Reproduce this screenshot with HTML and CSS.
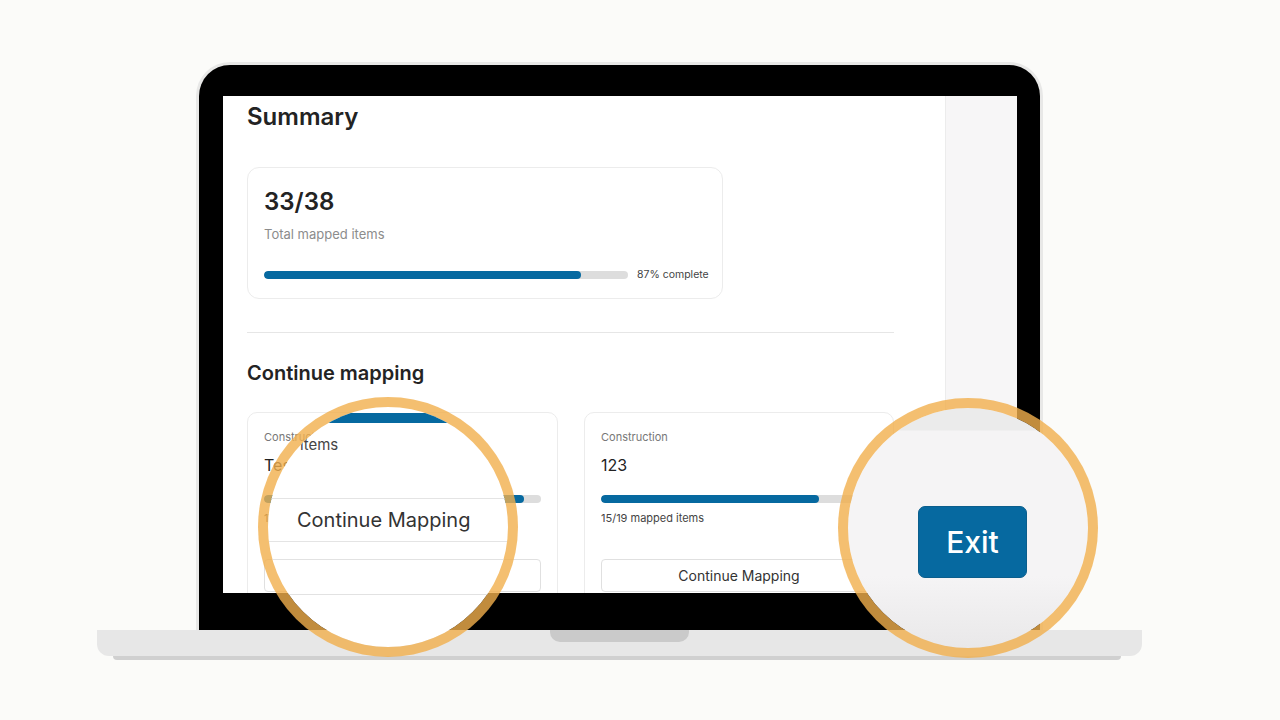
FILE: index.html
```html
<!DOCTYPE html>
<html lang="en">
<head>
<meta charset="utf-8">
<title>Summary</title>
<link rel="stylesheet" href="styles.css">
</head>
<body>
<div class="stage">
  <div class="laptop">
    <div class="lid">
      <div class="screen">
        <main class="main">
          <h1 class="title">Summary</h1>
          <section class="summary-card">
            <div class="big">33/38</div>
            <div class="muted">Total mapped items</div>
            <div class="bar-row">
              <div class="bar bar-summary"><div class="fill" style="width:87%"></div></div>
              <span class="pct">87% complete</span>
            </div>
          </section>
          <hr class="divider">
          <h2 class="subtitle">Continue mapping</h2>
          <div class="cards">
            <article class="card">
              <div class="cat">Construction</div>
              <div class="name">Test</div>
              <div class="bar"><div class="fill" style="width:94%"></div></div>
              <div class="count">17/18 mapped items</div>
              <button class="btn">Continue Mapping</button>
            </article>
            <article class="card">
              <div class="cat">Construction</div>
              <div class="name">123</div>
              <div class="bar"><div class="fill" style="width:79%"></div></div>
              <div class="count">15/19 mapped items</div>
              <button class="btn">Continue Mapping</button>
            </article>
          </div>
        </main>
        <aside class="side"></aside>
      </div>
    </div>
    <div class="base"><div class="notch"></div></div>
    <div class="foot"></div>
  </div>

  <div class="lens lens-left">
    <div class="mag-bar"></div>
    <div class="mag-items">items</div>
    <div class="mag-line first"></div>
    <div class="mag-text">Continue Mapping</div>
    <div class="mag-line second"></div>
    <div class="mag-btn"></div>
  </div>

  <div class="lens lens-right">
    <button class="exit">Exit</button>
  </div>
</div>
</body>
</html>
```

FILE: styles.css
```css
* { box-sizing: border-box; }

html, body {
  margin: 0;
  padding: 0;
  background: #fbfbf9;
  font-family: Inter, "Noto Sans", "Liberation Sans", sans-serif;
}

.stage {
  position: relative;
  width: 1280px;
  height: 720px;
  padding-top: 62px;
  overflow: hidden;
}

.laptop {
  margin-left: 97px;
  width: 1045px;
}

.lid {
  margin-left: 99px;
  width: 847px;
  height: 568px;
  border: 3px solid #e8e8e7;
  border-bottom: 0;
  border-radius: 34px 34px 0 0;
  background: #000;
  padding: 31px 23px 0 24px;
}

.screen {
  display: flex;
  height: 497px;
  background: #fff;
  overflow: hidden;
}

.main {
  flex: none;
  width: 722px;
  padding: 6px 51px 0 24px;
  background: #fff;
}

.side {
  flex: 1;
  background: #f7f6f7;
  border-left: 1px solid #ececec;
}

.title {
  margin: 0;
  font-size: 24px;
  line-height: 29px;
  font-weight: 600;
  color: #232323;
}

.summary-card {
  margin-top: 36px;
  width: 476px;
  height: 132px;
  border: 1px solid #ececec;
  border-radius: 12px;
  padding: 19px 16px 20px 16px;
}

.big {
  font-size: 24px;
  line-height: 29px;
  font-weight: 600;
  color: #232323;
}

.muted {
  margin-top: 10px;
  font-size: 13px;
  line-height: 16px;
  color: #8c8c8c;
}

.bar-row {
  margin-top: 26px;
  display: flex;
  align-items: center;
  gap: 9px;
}

.bar {
  height: 8px;
  background: #dddddd;
  border-radius: 4px;
  overflow: hidden;
}

.bar-summary { width: 364px; flex: none; }

.fill {
  height: 100%;
  background: #0669a0;
  border-radius: 4px;
}

.pct {
  flex: none;
  white-space: nowrap;
  font-size: 10.5px;
  line-height: 13px;
  color: #444;
}

.divider {
  margin: 33px 0 0;
  border: 0;
  border-top: 1px solid #e6e6e6;
  height: 0;
}

.subtitle {
  margin: 28px 0 0;
  font-size: 20px;
  line-height: 24px;
  font-weight: 600;
  color: #232323;
}

.cards {
  margin-top: 27px;
  display: grid;
  grid-template-columns: 311px 310px;
  gap: 26px;
}

.card {
  border: 1px solid #ececec;
  border-radius: 10px;
  padding: 18px 16px 16px;
}

.cat {
  font-size: 11px;
  line-height: 13px;
  color: #777;
}

.name {
  margin-top: 12px;
  font-size: 16px;
  line-height: 19px;
  color: #222;
}

.card .bar { margin-top: 20px; }

.count {
  margin-top: 9px;
  font-size: 11px;
  line-height: 13px;
  color: #444;
}

.btn {
  display: block;
  margin-top: 34px;
  width: 100%;
  height: 33px;
  border: 1px solid #e0e0e0;
  border-radius: 4px;
  background: #fff;
  font-family: Inter, "Noto Sans", "Liberation Sans", sans-serif;
  font-size: 14px;
  color: #333;
  padding: 0;
}

.base {
  height: 26px;
  background: #e7e7e7;
  border-radius: 0 0 12px 12px;
  display: flex;
  justify-content: center;
}

.notch {
  width: 139px;
  height: 12px;
  background: #cacaca;
  border-radius: 0 0 10px 10px;
}

.foot {
  margin-left: 16px;
  width: 1008px;
  height: 4px;
  background: #d0d0d0;
  border-radius: 0 0 4px 4px;
}

/* magnifier lenses */
.lens {
  position: absolute;
  width: 260px;
  height: 260px;
  border: 10px solid rgba(241, 175, 76, 0.8);
  border-radius: 50%;
  background-clip: padding-box;
  overflow: hidden;
}

.lens-left {
  left: 258px;
  top: 397px;
  background-color: #fff;
}

.mag-bar {
  margin-top: 6px;
  height: 10px;
  background: #0669a0;
}

.mag-items {
  margin-top: 13px;
  margin-left: 32px;
  font-size: 15px;
  line-height: 18px;
  color: #444;
}

.mag-line {
  height: 0;
  border-top: 1px solid #e4e4e4;
}

.mag-line.first { margin-top: 44px; }
.mag-line.second { margin-top: 9px; }

.mag-text {
  margin-top: 9px;
  margin-left: 29px;
  font-size: 20px;
  line-height: 24px;
  color: #333;
}

.mag-btn {
  margin-top: 17px;
  margin-left: -4px;
  width: 277px;
  height: 36px;
  border: 1px solid #e2e2e2;
  border-radius: 4px;
}

.lens-right {
  left: 838px;
  top: 398px;
  padding: 98px 0 0 70px;
  background-image: linear-gradient(to bottom, #ebebeb 0, #ebebeb 22px, #f5f4f5 23px, #f5f4f5 70%, #e9e8e9 100%);
}

.exit {
  display: flex;
  align-items: center;
  justify-content: center;
  width: 109px;
  height: 72px;
  background: #0669a0;
  border: 1px solid #0b5e8c;
  border-radius: 7px;
  color: #fff;
  font-family: Inter, "Noto Sans", "Liberation Sans", sans-serif;
  font-size: 30px;
  font-weight: 500;
  padding: 0;
}
```
